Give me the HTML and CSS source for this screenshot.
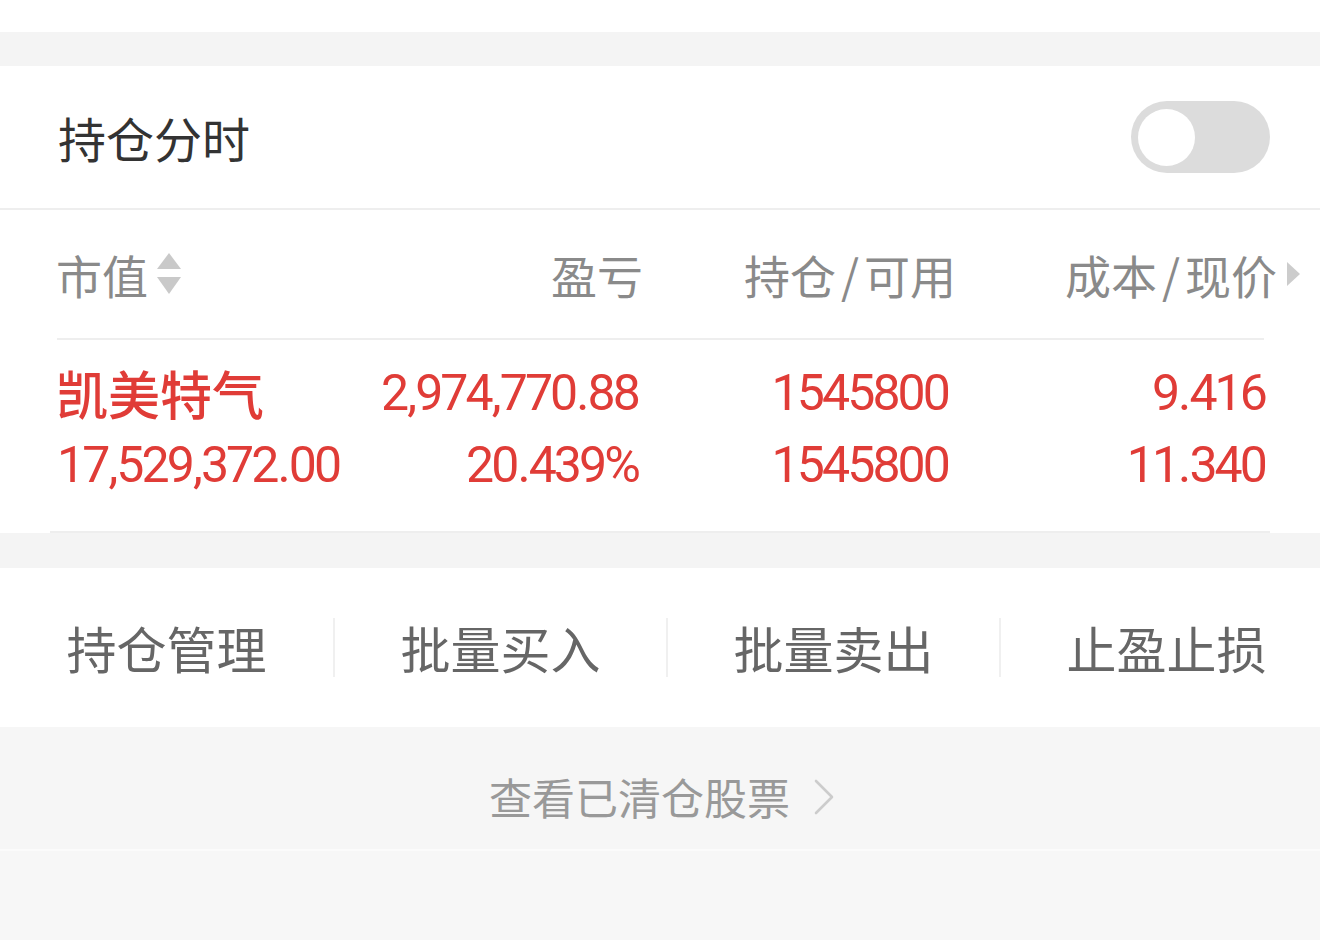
FILE: index.html
```html
<!DOCTYPE html>
<html lang="zh-CN">
<head>
<meta charset="utf-8">
<title>持仓</title>
<link rel="stylesheet" href="styles.css">
</head>
<body>
<div class="top-strip"></div>
<div class="gap"></div>
<section class="switch-row">
  <span class="switch-label">持仓分时</span>
  <span class="toggle"><span class="knob"></span></span>
</section>
<section class="holdings">
  <div class="thead">
    <div class="th th-first">市值
      <svg class="sort" width="24" height="42" viewBox="0 0 24 42"><polygon points="12,0 24,16 0,16" fill="#c9c9c9"/><polygon points="0,24 24,24 12,41" fill="#c9c9c9"/></svg>
    </div>
    <div class="th th-right">盈亏</div>
    <div class="th th-right">持仓<span class="slash">/</span>可用</div>
    <div class="th th-right th-last">成本<span class="slash">/</span>现价
      <svg class="more" width="13" height="24" viewBox="0 0 13 24"><polygon points="0,0 13,12 0,24" fill="#cccccc"/></svg>
    </div>
  </div>
  <div class="rule rule-head"></div>
  <div class="tbody">
    <div class="cell name">凯美特气</div>
    <div class="cell num c2">2<span class="p">,</span>974<span class="p">,</span>770<span class="p">.</span>88</div>
    <div class="cell num c3">1545800</div>
    <div class="cell num c4">9<span class="p">.</span>416</div>
    <div class="cell num c1">17<span class="p">,</span>529<span class="p">,</span>372<span class="p">.</span>00</div>
    <div class="cell num c2">20<span class="p">.</span>439%</div>
    <div class="cell num c3">1545800</div>
    <div class="cell num c4">11<span class="p">.</span>340</div>
  </div>
  <div class="rule rule-body"></div>
</section>
<div class="gap gap-2"></div>
<nav class="actions">
  <div class="action">持仓管理</div>
  <div class="action">批量买入</div>
  <div class="action">批量卖出</div>
  <div class="action">止盈止损</div>
</nav>
<div class="cleared">
  <span class="cleared-text">查看已清仓股票</span>
  <svg class="chev" width="22" height="36" viewBox="0 0 22 36"><polyline points="3,2 19,18 3,34" fill="none" stroke="#cccccc" stroke-width="2.6" stroke-linecap="round" stroke-linejoin="round"/></svg>
</div>
<div class="footer-fill"></div>
</body>
</html>
```

FILE: styles.css
```css
* { box-sizing: border-box; }
html, body { margin: 0; padding: 0; }
body {
  width: 1320px;
  background: #ffffff;
  font-family: "Noto Sans CJK SC", "Noto Sans", sans-serif;
  overflow: hidden;
}
.top-strip { height: 32px; background: #ffffff; }
.gap { height: 34px; background: #f4f4f4; }
.gap-2 { height: 35px; }

.switch-row {
  height: 144px;
  display: flex;
  align-items: center;
  justify-content: space-between;
  padding: 0 50px 0 58px;
  border-bottom: 2px solid #eeeeee;
  background: #fff;
}
.switch-label {
  font-size: 48px;
  color: #333333;
  line-height: 1;
}
.toggle {
  width: 139px;
  height: 72px;
  border-radius: 36px;
  background: #dcdcdc;
  display: flex;
  align-items: center;
  padding-left: 7px;
}
.knob {
  width: 57px;
  height: 57px;
  border-radius: 50%;
  background: #ffffff;
}

.holdings { background: #fff; }
.thead {
  height: 128px;
  display: grid;
  grid-template-columns: 283px 301px 316px 1fr;
  align-items: center;
  padding-left: 56px;
  font-size: 46px;
  color: #8a8a8a;
}
.th { line-height: 1; display: flex; align-items: center; }
.th-right { justify-content: flex-end; }
.th:nth-child(2) { margin-right: -3px; }
.th-first .sort { margin-left: 9px; }
.th-last { padding-right: 20px; }
.th-last .more { margin-left: 10px; }
.slash { margin: 0 5px; }

.rule { height: 2px; background: #eeeeee; }
.rule-head { margin: 0 56px 0 57px; }
.rule-body { margin: 0 50px; }

.tbody {
  display: grid;
  grid-template-columns: 283px 301px 316px 1fr;
  padding: 17px 0 30px 57px;
  color: #e03c37;
}
.cell { height: 72px; line-height: 72px; white-space: nowrap; }
.name {
  font-size: 52px;
  font-weight: 500;
  margin-left: -1px;
}
.num {
  font-family: Roboto, "Liberation Sans", sans-serif;
  font-size: 50px;
  letter-spacing: -2.9px;
}
.num .p { margin: 0 1px; }
.c1 { text-align: left; }
.c2 { text-align: right; padding-right: 3px; }
.c3 { text-align: right; padding-right: 9px; }
.c4 { text-align: right; padding-right: 55px; }

.actions {
  height: 159px;
  background: #ffffff;
  display: flex;
  align-items: center;
  overflow: hidden;
}
.action {
  flex: 0 0 333px;
  height: 59px;
  line-height: 59px;
  text-align: center;
  font-size: 50px;
  color: #666666;
}
.action + .action { border-left: 2px solid #f0f0f0; }

.cleared {
  height: 124px;
  background: #f6f6f6;
  display: flex;
  align-items: center;
  justify-content: center;
  padding: 16px 0 0 4px;
  border-bottom: 2px solid #fbfbfb;
}
.cleared-text {
  font-size: 43px;
  color: #999999;
  line-height: 1;
}
.chev { margin-left: 23px; margin-top: 2px; }
.footer-fill { height: 89px; background: #f7f7f7; }
```
